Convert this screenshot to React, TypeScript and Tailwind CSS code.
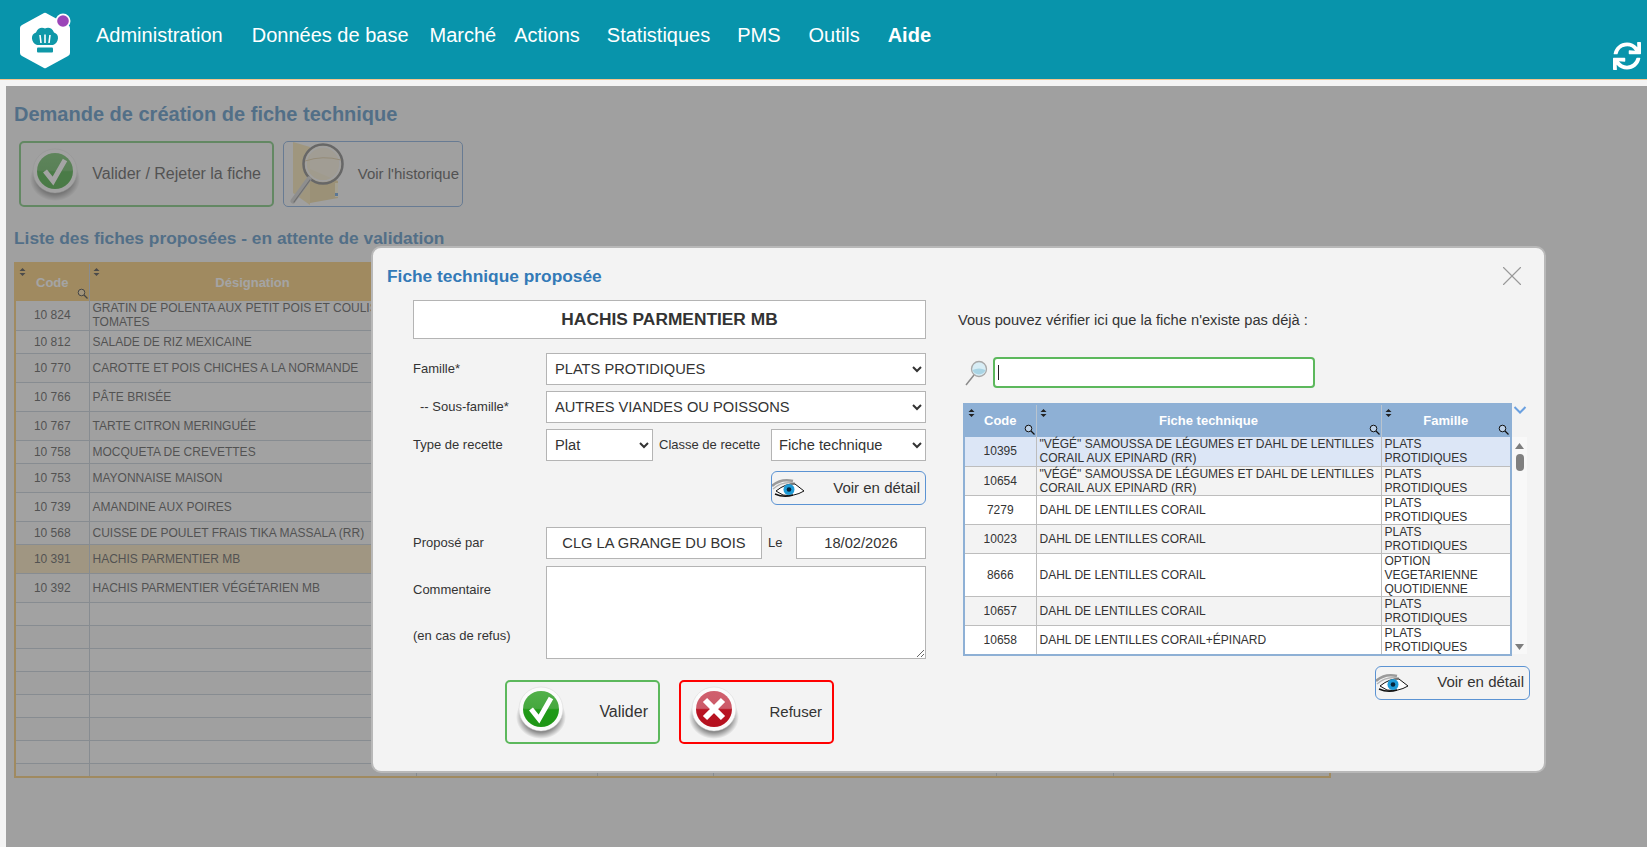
import { FaSync } from "react-icons/fa";
import { X } from "lucide-react";

const NAV_ITEMS = [
  { label: "Administration", className: "ml-[96px]" },
  { label: "Données de base", className: "ml-[29px]" },
  { label: "Marché", className: "ml-[21px]" },
  { label: "Actions", className: "ml-[18px]" },
  { label: "Statistiques", className: "ml-[27px]" },
  { label: "PMS", className: "ml-[27px]" },
  { label: "Outils", className: "ml-[28px]" },
  { label: "Aide", className: "ml-[28px] font-bold" },
];

const PROPOSED_ROWS = [
  { code: "10 824", name: "GRATIN DE POLENTA AUX PETIT POIS ET COULIS DE TOMATES", h: "h-[29px]" },
  { code: "10 812", name: "SALADE DE RIZ MEXICAINE", h: "h-[23px]" },
  { code: "10 770", name: "CAROTTE ET POIS CHICHES A LA NORMANDE", h: "h-[29px]" },
  { code: "10 766", name: "PÂTE BRISÉE", h: "h-[29px]" },
  { code: "10 767", name: "TARTE CITRON MERINGUÉE", h: "h-[29px]" },
  { code: "10 758", name: "MOCQUETA DE CREVETTES", h: "h-[23px]" },
  { code: "10 753", name: "MAYONNAISE MAISON", h: "h-[29px]" },
  { code: "10 739", name: "AMANDINE AUX POIRES", h: "h-[29px]" },
  { code: "10 568", name: "CUISSE DE POULET FRAIS TIKA MASSALA (RR)", h: "h-[23px]" },
  { code: "10 391", name: "HACHIS PARMENTIER MB", h: "h-[29px]", selected: true },
  { code: "10 392", name: "HACHIS PARMENTIER VÉGÉTARIEN MB", h: "h-[29px]" },
  { code: "", name: "", h: "h-[23px]" },
  { code: "", name: "", h: "h-[23px]" },
  { code: "", name: "", h: "h-[23px]" },
  { code: "", name: "", h: "h-[23px]" },
  { code: "", name: "", h: "h-[23px]" },
  { code: "", name: "", h: "h-[23px]" },
  { code: "", name: "", h: "h-[23px]" },
  { code: "", name: "", h: "h-[14px]" },
];

const SEARCH_ROWS = [
  { code: "10395", name: '"VÉGÉ" SAMOUSSA DE LÉGUMES ET DAHL DE LENTILLES CORAIL AUX EPINARD (RR)', family: "PLATS PROTIDIQUES", bg: "bg-[#dce6f6]", h: "h-[29px]" },
  { code: "10654", name: '"VÉGÉ" SAMOUSSA DE LÉGUMES ET DAHL DE LENTILLES CORAIL AUX EPINARD (RR)', family: "PLATS PROTIDIQUES", bg: "bg-[#f3f3f3]", h: "h-[29px]" },
  { code: "7279", name: "DAHL DE LENTILLES CORAIL", family: "PLATS PROTIDIQUES", bg: "bg-white", h: "h-[29px]" },
  { code: "10023", name: "DAHL DE LENTILLES CORAIL", family: "PLATS PROTIDIQUES", bg: "bg-[#f3f3f3]", h: "h-[29px]" },
  { code: "8666", name: "DAHL DE LENTILLES CORAIL", family: "OPTION VEGETARIENNE QUOTIDIENNE", bg: "bg-white", h: "h-[43px]" },
  { code: "10657", name: "DAHL DE LENTILLES CORAIL", family: "PLATS PROTIDIQUES", bg: "bg-[#f3f3f3]", h: "h-[29px]" },
  { code: "10658", name: "DAHL DE LENTILLES CORAIL+ÉPINARD", family: "PLATS PROTIDIQUES", bg: "bg-white", h: "h-[29px]" },
];

function Logo() {
  return (
    <svg width="54" height="60" viewBox="0 0 54 60" className="absolute left-[18px] top-[10px]">
      <path d="M26 3 Q27 2.500 28 3 L50 15 Q52 16 52 18 L52 43 Q52 45 50 46 L28 58 Q27 58.500 26 58 L4 46 Q2 45 2 43 L2 18 Q2 16 4 15 Z" fill="#fff" />
      <path
        d="M19 35 C13 33 12 24 18 22.500 C20 17.500 24 17 27 18.500 C30 17 34 17.500 36 22.500 C42 24 41 33 35 35 Z"
        fill="#0f98a8"
      />
      <path d="M22 25 L23 33 M27 24.500 L27 33 M32 25 L31 33" stroke="#fff" strokeWidth="1.600" />
      <rect x="19" y="37.500" width="16" height="5" rx="1" fill="#0f98a8" />
      <circle cx="45" cy="11" r="7.500" fill="#fff" />
      <circle cx="45" cy="11" r="5.800" fill="#9b45b8" />
    </svg>
  );
}

function GlossyBadge({ kind }: { kind: "ok" | "no" }) {
  const id = kind === "ok" ? "disc-ok" : "disc-no";
  return (
    <svg width="50" height="54" viewBox="0 0 50 54" className="shrink-0">
      <defs>
        <linearGradient id={id} x1="0" y1="0" x2="0" y2="1">
          <stop offset="0" stopColor={kind === "ok" ? "#52b04a" : "#d0606e"} />
          <stop offset="0.48" stopColor={kind === "ok" ? "#45a83e" : "#cc5a68"} />
          <stop offset="0.52" stopColor={kind === "ok" ? "#209a18" : "#b81422"} />
          <stop offset="1" stopColor={kind === "ok" ? "#1f9616" : "#b5101e"} />
        </linearGradient>
        <radialGradient id={`${id}-shadow`}>
          <stop offset="0.6" stopColor="#000" stopOpacity="0.55" />
          <stop offset="1" stopColor="#000" stopOpacity="0" />
        </radialGradient>
      </defs>
      <ellipse cx="25" cy="32" rx="25" ry="22" fill={`url(#${id}-shadow)`} />
      <circle cx="25" cy="24" r="22" fill="#fbfbfb" stroke="#d5d5d5" strokeWidth="0.500" />
      <circle cx="25" cy="24" r="18" fill={`url(#${id})`} />
      {kind === "ok" ? (
        <path d="M15 24 L23 34 L35 13" fill="none" stroke="#fff" strokeWidth="5" strokeLinejoin="miter" />
      ) : (
        <path d="M16 15 L34 33 M34 15 L16 33" fill="none" stroke="#fff" strokeWidth="6" />
      )}
    </svg>
  );
}

function FolderLens() {
  return (
    <svg width="58" height="66" viewBox="0 0 58 66" className="shrink-0">
      <path d="M5 1 L22 6 L22 64 L5 52 Z" fill="#f2dda0" />
      <path d="M22 28 L50 40 L50 57 L22 62 Z" fill="#e8cf8e" />
      <path d="M47 42 L50 42 L50 56 L47 56 Z" fill="#fff4d0" />
      <rect x="47" y="52" width="3" height="3" fill="#4a90d9" />
      <circle cx="35" cy="23" r="19.500" fill="#f8ecd0" fillOpacity="0.850" stroke="#666" strokeWidth="2.500" />
      <circle cx="35" cy="23" r="17" fill="none" stroke="#f4f4f4" strokeWidth="1.500" />
      <path d="M17 20 Q35 14 53 19" fill="none" stroke="#d8c090" strokeWidth="1" />
      <path d="M21 38 L5 60" stroke="#c8c8c8" strokeWidth="5" strokeLinecap="round" />
      <path d="M22 39 L6 61" stroke="#777" strokeWidth="1.200" strokeLinecap="round" />
    </svg>
  );
}

function Eye() {
  return (
    <svg width="33" height="20" viewBox="0 0 33 20" className="shrink-0">
      <path d="M0 8 Q9 0 21 3" fill="none" stroke="#9a9a9a" strokeWidth="2.500" />
      <path d="M1 11 Q10 3 23 5" fill="none" stroke="#b5b5b5" strokeWidth="1.500" />
      <path d="M4 13 Q14 5 23 6 L32 13 Q22 19 11 17 Z" fill="#fff" stroke="#111" strokeWidth="1" />
      <circle cx="17" cy="11.500" r="5.500" fill="#1e9bd7" />
      <circle cx="17" cy="11.500" r="2.300" fill="#06243a" />
      <path d="M3 16 Q12 20 21 17" fill="none" stroke="#111" strokeWidth="1.500" />
    </svg>
  );
}

function SmallLoupe() {
  return (
    <svg width="24" height="26" viewBox="0 0 24 26">
      <circle cx="15" cy="9" r="7.500" fill="#d8edf5" stroke="#a8a8a8" strokeWidth="1.300" />
      <path d="M8.500 10 Q15 7 21.500 10 A7 7 0 0 1 8.500 10" fill="#a9d4e4" />
      <path d="M10 15 L2 25" stroke="#8a8a8a" strokeWidth="1.500" />
    </svg>
  );
}

function SortMark() {
  return (
    <svg width="7" height="8" viewBox="0 0 7 8" className="absolute left-[3px] top-[4px]">
      <path d="M3.500 0 L6.500 3 L0.500 3 Z M3.500 8 L6.500 5 L0.500 5 Z" fill="#222" />
    </svg>
  );
}

function HeadSearch() {
  return (
    <svg width="11" height="11" viewBox="0 0 11 11" className="absolute right-[1px] bottom-[2px]">
      <circle cx="4.500" cy="4.500" r="3.300" fill="#fff" fillOpacity="0.400" stroke="#111" strokeWidth="1" />
      <path d="M7 7 L10.500 10.500" stroke="#111" strokeWidth="1.200" />
    </svg>
  );
}

function HeadCell({ label, className }: { label: string; className?: string }) {
  return (
    <th className={`relative border-r border-[#b9c4cf] font-bold text-white text-center ${className ?? ""}`}>
      <SortMark />
      {label}
      <HeadSearch />
    </th>
  );
}

function ActionButton({
  label,
  icon,
  className,
}: {
  label: string;
  icon: React.ReactNode;
  className: string;
}) {
  return (
    <div className={`flex items-center justify-between rounded-[5px] ${className}`}>
      {icon}
      <span className="text-[#333]">{label}</span>
    </div>
  );
}

function DetailButton({ className }: { className: string }) {
  return (
    <div className={`flex h-[34px] items-center justify-between rounded-[6px] border border-[#5b93d3] pr-[5px] text-[15px] text-[#333] ${className}`}>
      <Eye />
      <span>Voir en détail</span>
    </div>
  );
}

const fieldClass = "h-[32px] border border-[#b4b4b4] bg-white text-[14.67px] text-[#333]";

function ProposedForm() {
  return (
    <div className="ml-[40px] w-[513px] text-[13px] text-[#333]">
      <div className="flex h-[39px] items-center justify-center border border-[#b4b4b4] bg-white text-[17.33px] font-bold">
        HACHIS PARMENTIER MB
      </div>

      <div className="mt-[14px] flex items-center">
        <span className="w-[133px]">Famille*</span>
        <select defaultValue="a" className={`${fieldClass} w-[380px] pl-[4px]`}>
          <option value="a">PLATS PROTIDIQUES</option>
        </select>
      </div>
      <div className="mt-[6px] flex items-center">
        <span className="w-[133px] pl-[7px]">-- Sous-famille*</span>
        <select defaultValue="a" className={`${fieldClass} w-[380px] pl-[4px]`}>
          <option value="a">AUTRES VIANDES OU POISSONS</option>
        </select>
      </div>
      <div className="mt-[6px] flex items-center">
        <span className="w-[133px]">Type de recette</span>
        <select defaultValue="a" className={`${fieldClass} w-[107px] pl-[4px]`}>
          <option value="a">Plat</option>
        </select>
        <span className="ml-[6px] w-[112px]">Classe de recette</span>
        <select defaultValue="a" className={`${fieldClass} w-[155px] pl-[3px]`}>
          <option value="a">Fiche technique</option>
        </select>
      </div>
      <div className="mt-[10px] flex justify-end">
        <DetailButton className="w-[155px]" />
      </div>

      <div className="mt-[22px] flex items-center">
        <span className="w-[133px]">Proposé par</span>
        <input readOnly value="CLG LA GRANGE DU BOIS" className={`${fieldClass} w-[216px] text-center`} />
        <span className="ml-[6px] w-[28px]">Le</span>
        <input readOnly value="18/02/2026" className={`${fieldClass} w-[130px] text-center`} />
      </div>
      <div className="mt-[7px] flex">
        <div className="flex w-[133px] flex-col gap-[30px] pt-[16px] leading-[16px]">
          <span>Commentaire</span>
          <span>(en cas de refus)</span>
        </div>
        <textarea className="h-[93px] w-[380px] border border-[#b4b4b4] bg-white" />
      </div>

      <div className="ml-[92px] mt-[21px] flex gap-[19px] text-[16px]">
        <ActionButton
          label="Valider"
          icon={<GlossyBadge kind="ok" />}
          className="h-[64px] w-[155px] border-2 border-[#5cb85c] pl-[9px] pr-[10px]"
        />
        <ActionButton
          label="Refuser"
          icon={<GlossyBadge kind="no" />}
          className="h-[64px] w-[155px] border-2 border-[#ff0000] pl-[8px] pr-[10px] text-[15px]"
        />
      </div>
    </div>
  );
}

function SearchPanel() {
  return (
    <div className="ml-[32px] w-[572px] text-[#333]">
      <p className="mt-[10px] text-[14.67px] leading-[20px]">Vous pouvez vérifier ici que la fiche n'existe pas déjà :</p>

      <div className="mt-[27px] flex items-center">
        <div className="ml-[6px] w-[29px]">
          <SmallLoupe />
        </div>
        <div className="relative">
          <input readOnly className="h-[31px] w-[322px] rounded-[4px] border-2 border-[#5cb85c] bg-white" />
          <span className="absolute left-[5px] top-[8px] h-[15px] w-px bg-[#222]" />
        </div>
      </div>

      <div className="ml-[5px] mt-[15px] flex">
        <table className="w-[549px] table-fixed border-collapse border-2 border-[#8eb0d5] text-[12px] leading-[14px]">
          <colgroup>
            <col className="w-[72px]" />
            <col className="w-[345px]" />
            <col />
          </colgroup>
          <thead>
            <tr className="h-[33px] bg-[#8eb0d5] text-[13px]">
              <HeadCell label="Code" />
              <HeadCell label="Fiche technique" />
              <HeadCell label="Famille" />
            </tr>
          </thead>
          <tbody>
            {SEARCH_ROWS.map((row) => (
              <tr key={row.code} className={`${row.h} ${row.bg} border-b border-[#bdbdbd]`}>
                <td className="border-r border-[#bdbdbd] text-center">{row.code}</td>
                <td className="border-r border-[#bdbdbd] px-[3px]">{row.name}</td>
                <td className="px-[3px]">{row.family}</td>
              </tr>
            ))}
          </tbody>
        </table>
        <div className="flex w-[15px] flex-col">
          <svg width="14" height="10" viewBox="0 0 14 10" className="ml-[1px] mt-[2px]">
            <path d="M1.500 2 L7 7.500 L12.500 2" fill="none" stroke="#6aa0e0" strokeWidth="2" />
          </svg>
          <div className="mt-[22px] flex h-[217px] flex-col items-center bg-[#f8f8f8] pt-[6px]">
            <svg width="9" height="6" viewBox="0 0 9 6">
              <path d="M4.500 0 L9 6 L0 6 Z" fill="#7d7d7d" />
            </svg>
            <div className="mt-[5px] h-[17px] w-[8px] rounded-full bg-[#808080]" />
            <svg width="9" height="6" viewBox="0 0 9 6" className="mt-auto mb-[4px]">
              <path d="M0 0 L9 0 L4.500 6 Z" fill="#7d7d7d" />
            </svg>
          </div>
        </div>
      </div>

      <div className="ml-[417px] mt-[10px]">
        <DetailButton className="w-[155px]" />
      </div>
    </div>
  );
}

export default function App() {
  return (
    <div className="relative h-[847px] w-[1647px] overflow-hidden bg-[#f4f4f4] font-['Liberation_Sans',Arial,sans-serif]">
      <header className="relative h-[80px] border-b border-[#f6c48c] bg-[#0894ab]">
        <Logo />
        <nav className="flex h-[70px] items-center text-[20px] text-white">
          {NAV_ITEMS.map((item) => (
            <span key={item.label} className={item.className}>
              {item.label}
            </span>
          ))}
        </nav>
        <FaSync className="absolute left-[1613px] top-[42px] text-white" size={28} />
      </header>

      <main className="relative ml-[6px] mt-[6px] h-[761px]">
        <div className="pl-[9px] pt-[16px]">
          <h1 className="-ml-[1px] text-[20px] font-bold leading-[24px] text-[#337ab7]">Demande de création de fiche technique</h1>
          <div className="ml-[4px] mt-[15px] flex gap-[9px] text-[16px]">
            <ActionButton
              label="Valider / Rejeter la fiche"
              icon={<GlossyBadge kind="ok" />}
              className="h-[66px] w-[255px] border-2 border-[#5cb85c] pl-[9px] pr-[11px]"
            />
            <ActionButton
              label="Voir l'historique"
              icon={<FolderLens />}
              className="h-[66px] w-[180px] border border-[#6a9ad5] pl-[4px] pr-[3px] text-[15px]"
            />
          </div>
          <h2 className="-ml-[1px] mt-[20px] text-[17.33px] font-bold leading-[22px] text-[#337ab7]">
            Liste des fiches proposées - en attente de validation
          </h2>

          <table className="-ml-[1px] mt-[13px] w-[1317px] table-fixed border-collapse border-2 border-[#f5be55] text-[12px] leading-[14px] text-[#333]">
            <colgroup>
              <col className="w-[74px]" />
              <col className="w-[327px]" />
              <col className="w-[181px]" />
              <col className="w-[116px]" />
              <col className="w-[283px]" />
              <col className="w-[117px]" />
              <col />
            </colgroup>
            <thead>
              <tr className="h-[38px] bg-[#f5be55] text-[13px]">
                <HeadCell label="Code" />
                <HeadCell label="Désignation" />
                <th />
                <th />
                <th />
                <th />
                <th />
              </tr>
            </thead>
            <tbody>
              {PROPOSED_ROWS.map((row, i) => (
                <tr
                  key={i}
                  className={`${row.h} border-b border-[#b6c3cf] ${row.selected ? "bg-[#f5dcaa]" : i % 2 === 0 ? "bg-[#f4f4f4]" : "bg-[#fbfbfb]"}`}
                >
                  <td className="border-r border-[#b6c3cf] text-center">{row.code}</td>
                  <td className="border-r border-[#b6c3cf] px-[3px]">{row.name}</td>
                  <td className="border-r border-[#b6c3cf]" />
                  <td className="border-r border-[#b6c3cf]" />
                  <td className="border-r border-[#b6c3cf]" />
                  <td className="border-r border-[#b6c3cf]" />
                  <td />
                </tr>
              ))}
            </tbody>
          </table>
        </div>

        {/* page is dimmed behind the dialog */}
        <div className="absolute inset-0 bg-[rgba(104,104,104,0.6)]" />
      </main>

      <section className="absolute left-[371px] top-[246px] h-[527px] w-[1175px] rounded-[10px] border-2 border-[#b8b8b8] bg-[#f3f3f3]">
        <h3 className="pl-[14px] pt-[18px] text-[17.33px] font-bold leading-[20px] text-[#337ab7]">Fiche technique proposée</h3>
        <X className="absolute right-[15px] top-[11px] text-[#999]" size={34} strokeWidth={0.8} />
        <div className="mt-[14px] flex">
          <ProposedForm />
          <SearchPanel />
        </div>
      </section>
    </div>
  );
}
